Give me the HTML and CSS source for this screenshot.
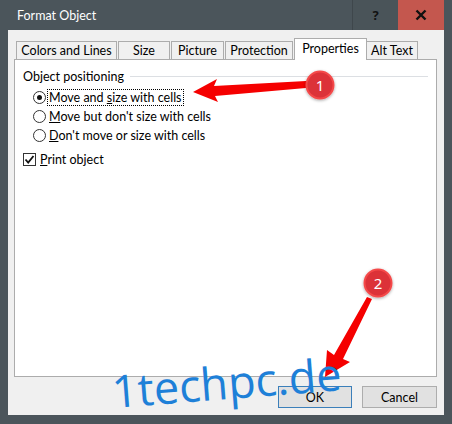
FILE: index.html
```html
<!DOCTYPE html>
<html lang="en">
<head>
  <meta charset="UTF-8">
  <title>Format Object</title>
  <link rel="stylesheet" href="styles.css">
</head>
<body>
  <div class="window">
    <div class="titlebar">
      <span class="title">Format Object</span>
      <div class="caption-buttons">
        <button class="cap-btn help">?</button>
        <button class="cap-btn close">
          <svg width="12" height="12" viewBox="0 0 12 12"><path d="M1.5 1.5 L10.5 10.5 M10.5 1.5 L1.5 10.5" stroke="#111" stroke-width="2.4"/></svg>
        </button>
      </div>
    </div>

    <div class="client">
      <div class="tabs">
        <div class="tab t-colors">Colors and Lines</div>
        <div class="tab t-size">Size</div>
        <div class="tab t-picture">Picture</div>
        <div class="tab t-protection">Protection</div>
        <div class="tab t-properties selected">Properties</div>
        <div class="tab t-alt">Alt Text</div>
      </div>

      <div class="panel">
        <div class="group-title">
          <span>Object positioning</span>
          <span class="rule"></span>
        </div>
        <div class="options">
          <div class="radio-row">
            <span class="radio checked"></span>
            <span class="label focused">Move and <u>s</u>ize with cells</span>
          </div>
          <div class="radio-row">
            <span class="radio"></span>
            <span class="label"><u>M</u>ove but don't size with cells</span>
          </div>
          <div class="radio-row">
            <span class="radio"></span>
            <span class="label"><u>D</u>on't move or size with cells</span>
          </div>
        </div>
        <div class="check-row">
          <span class="checkbox">
            <svg width="11" height="11" viewBox="0 0 11 11"><path d="M1.5 5.5 L4.2 8.5 L9.5 2" fill="none" stroke="#111" stroke-width="1.8"/></svg>
          </span>
          <span class="label"><u>P</u>rint object</span>
        </div>
      </div>

      <div class="buttons">
        <button class="btn default">OK</button>
        <button class="btn cancel">Cancel</button>
      </div>
    </div>
  </div>

  <!-- callouts drawn over the dialog -->
  <svg class="callouts" width="452" height="424" viewBox="0 0 452 424">
    <defs>
      <filter id="shadow" x="-50%" y="-50%" width="200%" height="200%">
        <feDropShadow dx="0" dy="1" stdDeviation="1.5" flood-color="#000" flood-opacity="0.35"/>
      </filter>
    </defs>
    <polygon points="193,92 217,79 214,86 306,81 306,88 215,96 218,102" fill="#f50000"/>
    <circle cx="320" cy="85" r="13.5" fill="#dc3038" stroke="#f44a4a" stroke-width="2" filter="url(#shadow)"/>
    <text x="320" y="90.5" class="num">1</text>

    <polygon points="325,377 327,350 334,355 367,297 372,299 343,359 350,362" fill="#f50000"/>
    <circle cx="378" cy="283" r="13.5" fill="#dc3038" stroke="#f44a4a" stroke-width="2" filter="url(#shadow)"/>
    <text x="378" y="288.5" class="num">2</text>
  </svg>

  <div class="watermark">1techpc.de</div>
</body>
</html>
```

FILE: styles.css
```css
body {
  margin: 0;
  width: 452px;
  height: 424px;
  overflow: hidden;
  background-color: #4b555b;
  font-family: Lato, "Noto Sans", sans-serif;
  font-size: 12.5px;
  color: #000;
  position: relative;
}

.window {
  display: flex;
  flex-direction: column;
  height: 424px;
}

.titlebar {
  display: flex;
  height: 30px;
  flex-shrink: 0;
}
.title {
  flex: 1;
  padding-left: 17px;
  line-height: 31px;
  color: #fff;
}
.caption-buttons {
  display: flex;
  margin-right: 8px;
}
.cap-btn {
  width: 46px;
  border: none;
  padding: 0;
  display: flex;
  align-items: center;
  justify-content: center;
  font-family: "Noto Sans", sans-serif;
  font-weight: bold;
  font-size: 13px;
  color: #111;
}
.help {
  background-color: #4a5459;
  border-left: 1px solid #3f474c;
}
.close {
  background-color: #c4574e;
}

.client {
  margin: 0 8px;
  height: 385px;
  box-sizing: border-box;
  background-color: #f0f0f0;
  padding: 8px 7px 0 6px;
}

/* tab strip */
.tabs {
  display: flex;
  align-items: flex-start;
  height: 21px;
  padding-left: 2px;
  gap: 1px;
}
.tab {
  box-sizing: border-box;
  height: 18px;
  margin-top: 3px;
  border: 1px solid #acacac;
  border-bottom: none;
  text-align: center;
  line-height: 18px;
  background-color: #f0f0f0;
  white-space: nowrap;
}
.t-colors { width: 101px; }
.t-size { width: 52px; }
.t-picture { width: 53px; }
.t-protection { width: 68px; }
.t-properties { width: 73px; }
.t-alt { width: 52px; margin-left: -2px; }
.tab.selected {
  height: 22px;
  margin-top: 0;
  background-color: #fff;
  line-height: 20px;
  position: relative;
  z-index: 1;
}

.panel {
  box-sizing: border-box;
  height: 318px;
  border: 1px solid #acacac;
  background-color: #fff;
  padding: 8px 8px 0 8px;
}
.group-title {
  display: flex;
  align-items: center;
  height: 16px;
}
.rule {
  flex: 1;
  height: 1px;
  background-color: #dcdfe3;
  margin: 0 0 0 6px;
}

.options {
  margin-top: 4px;
  padding-left: 10px;
}
.radio-row,
.check-row {
  display: flex;
  align-items: center;
  height: 19px;
}
.radio {
  box-sizing: border-box;
  width: 13px;
  height: 13px;
  border: 1px solid #333;
  border-radius: 50%;
  background-color: #fff;
  margin-right: 1px;
  display: flex;
  align-items: center;
  justify-content: center;
}
.radio.checked::after {
  content: "";
  width: 5px;
  height: 5px;
  border-radius: 50%;
  background-color: #111;
}
.label {
  border: 1px dotted transparent;
  padding: 0 1px;
  line-height: 15px;
}
.label.focused {
  border-color: #000;
}

.check-row {
  margin-top: 5px;
}
.checkbox {
  box-sizing: border-box;
  width: 13px;
  height: 13px;
  border: 1px solid #333;
  background-color: #fff;
  margin-right: 2px;
  display: flex;
  align-items: center;
  justify-content: center;
}

.buttons {
  display: flex;
  justify-content: flex-end;
  gap: 10px;
  margin-top: 9px;
}
.btn {
  box-sizing: border-box;
  height: 22px;
  border: 1px solid #adadad;
  background-color: #e1e1e1;
  font-family: Lato, "Noto Sans", sans-serif;
  font-size: 12.5px;
  color: #000;
  padding: 0;
}
.btn.default {
  width: 74px;
  border-color: #3b7fba;
}
.btn.cancel {
  width: 75px;
}

.callouts {
  position: absolute;
  left: 0;
  top: 0;
  pointer-events: none;
}
.num {
  font-family: "Noto Sans", sans-serif;
  font-size: 15px;
  fill: #fff;
  text-anchor: middle;
}

.watermark {
  position: absolute;
  left: 114px;
  top: 365px;
  font-family: "Open Sans", sans-serif;
  font-size: 45px;
  line-height: 52px;
  color: #1e80d8;
  transform: rotate(-4.5deg);
  transform-origin: 0 100%;
  pointer-events: none;
}
```
